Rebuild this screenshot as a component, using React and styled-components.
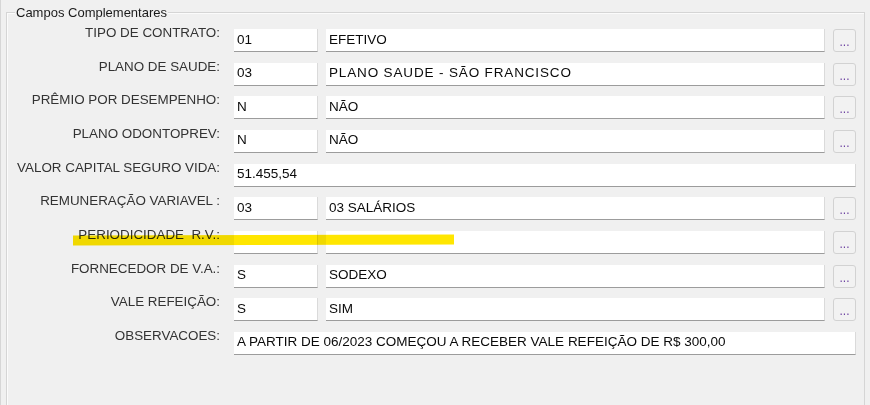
import React from 'react';
import styled, { createGlobalStyle } from 'styled-components';

const GlobalStyle = createGlobalStyle`
  html, body {
    margin: 0;
    padding: 0;
    background: #f0f0f0;
  }
  body {
    font-family: "Liberation Sans", Arial, sans-serif;
  }
`;

const rows = [
  { label: 'TIPO DE CONTRATO:', code: '01', desc: 'EFETIVO' },
  { label: 'PLANO DE SAUDE:', code: '03', desc: 'PLANO SAUDE - SÃO FRANCISCO', wide: true },
  { label: 'PRÊMIO POR DESEMPENHO:', code: 'N', desc: 'NÃO' },
  { label: 'PLANO ODONTOPREV:', code: 'N', desc: 'NÃO' },
  { label: 'VALOR CAPITAL SEGURO VIDA:', value: '51.455,54' },
  { label: 'REMUNERAÇÃO VARIAVEL :', code: '03', desc: '03 SALÁRIOS' },
  { label: 'PERIODICIDADE  R.V.:', code: '', desc: '' },
  { label: 'FORNECEDOR DE V.A.:', code: 'S', desc: 'SODEXO' },
  { label: 'VALE REFEIÇÃO:', code: 'S', desc: 'SIM' },
  {
    label: 'OBSERVACOES:',
    value: 'A PARTIR DE 06/2023 COMEÇOU A RECEBER VALE REFEIÇÃO DE R$ 300,00',
  },
];

const Screen = styled.div`
  position: relative;
  width: 870px;
  height: 405px;
  overflow: hidden;
  background: #f0f0f0;
  border-left: 1px solid #d6d6d6;
  box-sizing: border-box;
`;

const GroupBox = styled.fieldset`
  margin: 5px 0 0 5px;
  padding: 0;
  width: 859px;
  height: 430px;
  box-sizing: border-box;
  border: 1px solid #d5d5d5;
  box-shadow: inset 1px 1px 0 #fbfbfb;
  min-inline-size: 0;
`;

const Caption = styled.legend`
  margin-left: 8px;
  padding: 0 1px;
  font-size: 13px;
  line-height: 15px;
  color: #1a1a1a;
  background: #f0f0f0;
`;

const Form = styled.div`
  display: grid;
  grid-template-columns: 219px 84px 499px 23px;
  grid-auto-rows: 23px;
  column-gap: 8px;
  row-gap: 10.67px;
  padding-top: 9px;
`;

const Label = styled.div`
  grid-column: 1;
  align-self: start;
  margin-top: -4px;
  padding-right: 6px;
  text-align: right;
  white-space: pre;
  font-size: 13.4px;
  line-height: 16px;
  color: #333;
`;

const Field = styled.div`
  grid-column: ${p => (p.$span ? '2 / 5' : 'auto')};
  display: flex;
  align-items: center;
  padding: 0 3px 1px;
  background: #fff;
  border-right: 1px solid #dadada;
  border-bottom: 1px solid #9c9c9c;
  box-sizing: border-box;
  font-size: 13.5px;
  line-height: 16px;
  letter-spacing: ${p => (p.$wide ? '0.85px' : 'normal')};
  color: #0a0a0a;
  white-space: pre;
  overflow: hidden;
`;

const DotsButton = styled.div`
  display: flex;
  align-items: flex-end;
  justify-content: center;
  padding-bottom: 3px;
  box-sizing: border-box;
  border: 1px solid #d2d2d2;
  border-radius: 3px;
  background: #f2f2f2;
  font-size: 12px;
  line-height: 12px;
  color: #6b3fa0;
`;

const Highlight = styled.div`
  position: absolute;
  left: 72px;
  top: 235px;
  width: 381px;
  height: 10px;
  background: #ffe600;
  mix-blend-mode: multiply;
  transform: rotate(-0.15deg);
  pointer-events: none;
`;

export default function App() {
  return (
    <>
      <GlobalStyle />
      <Screen>
        <GroupBox>
          <Caption>Campos Complementares</Caption>
          <Form>
            {rows.map((r, i) => (
              <React.Fragment key={i}>
                <Label>{r.label}</Label>
                {r.value !== undefined ? (
                  <Field $span>{r.value}</Field>
                ) : (
                  <>
                    <Field>{r.code}</Field>
                    <Field $wide={r.wide}>{r.desc}</Field>
                    <DotsButton>...</DotsButton>
                  </>
                )}
              </React.Fragment>
            ))}
          </Form>
        </GroupBox>
        <Highlight />
      </Screen>
    </>
  );
}
